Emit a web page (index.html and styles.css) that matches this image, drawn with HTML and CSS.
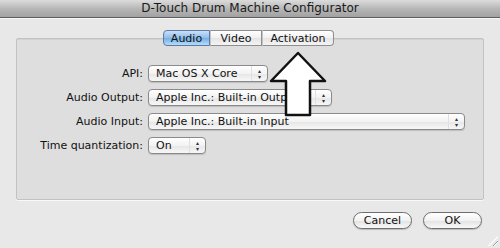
FILE: index.html
```html
<!DOCTYPE html>
<html>
<head>
    <title>D-Touch Drum Machine Configurator</title>
    <link rel="stylesheet" href="styles.css">
</head>
<body>
    <div class="window">
        <div class="titlebar">D-Touch Drum Machine Configurator</div>
        <div class="content">
            <div class="tabs">
                <span class="tab selected">Audio</span>
                <span class="tab">Video</span>
                <span class="tab">Activation</span>
            </div>
            <div class="group">
                <div class="row">
                    <label>API:</label>
                    <div class="popup w-api"><span class="value">Mac OS X Core</span><span class="arrows">&#9652;<br>&#9662;</span></div>
                </div>
                <div class="row">
                    <label>Audio Output:</label>
                    <div class="popup w-out"><span class="value">Apple Inc.: Built-in Output</span><span class="arrows">&#9652;<br>&#9662;</span></div>
                </div>
                <div class="row">
                    <label>Audio Input:</label>
                    <div class="popup w-in"><span class="value">Apple Inc.: Built-in Input</span><span class="arrows">&#9652;<br>&#9662;</span></div>
                </div>
                <div class="row">
                    <label>Time quantization:</label>
                    <div class="popup w-quant"><span class="value">On</span><span class="arrows">&#9652;<br>&#9662;</span></div>
                </div>
            </div>
            <div class="buttons">
                <button>Cancel</button>
                <button>OK</button>
            </div>
        </div>
        <div class="grip"></div>
        <!-- annotation arrow drawn over the dialog -->
        <svg class="pointer" width="60" height="70" viewBox="0 0 60 70">
            <path d="M30 2 L57 30 L42 30 L42 64 L18 64 L18 30 L3 30 Z" fill="#ffffff" stroke="#111" stroke-width="2.5" stroke-linejoin="round"/>
        </svg>
    </div>
</body>
</html>
```

FILE: styles.css
```css
body {
    margin: 0;
    font-family: "DejaVu Sans", sans-serif;
    font-size: 11px;
    color: #111;
    background-color: #e8e8e8;
}
.window {
    position: relative;
    width: 500px;
    height: 248px;
    overflow: hidden;
}
.titlebar {
    height: 17px;
    line-height: 17px;
    text-align: center;
    font-size: 12px;
    color: #1a1a1a;
    background: linear-gradient(#dcdcdc, #b4b4b4 55%, #a2a2a2);
    border-bottom: 1px solid #5e5e5e;
    box-shadow: 0 1px 0 #f6f6f6;
}
.content {
    padding: 12px 16px 0 16px;
}
.tabs {
    display: flex;
    justify-content: center;
    position: relative;
    z-index: 1;
    height: 16px;
    margin: 0 3px -8px 0;
}
.tab {
    display: flex;
    align-items: center;
    justify-content: center;
    box-sizing: border-box;
    height: 16px;
    background: linear-gradient(#ffffff, #f0f0f0 50%, #e4e4e4 51%, #f4f4f4);
    border: 1px solid #8e8e8e;
    border-left: 1px solid #c4c4c4;
}
.tab:first-child {
    border-left: 1px solid #6b7fa6;
    border-radius: 4px 0 0 4px;
    width: 47px;
}
.tab:nth-child(2) {
    width: 52px;
}
.tab:last-child {
    border-radius: 0 4px 4px 0;
    width: 72px;
}
.tab.selected {
    background: linear-gradient(#c9e0f8, #8fbde9 50%, #72aee6 51%, #b7dcf9);
    border-color: #5f78a6;
}
.group {
    height: 134px;
    padding-top: 26px;
    background-color: #dedede;
    border: 1px solid #c2c2c2;
    border-radius: 2px;
    box-shadow: 0 1px 0 #f8f8f8, inset 0 1px 0 #d2d2d2;
}
.row {
    display: flex;
    align-items: center;
    height: 17px;
    margin-bottom: 7px;
}
.row label {
    width: 126px;
    text-align: right;
    margin-right: 5px;
}
.popup {
    display: flex;
    align-items: center;
    height: 15px;
    border: 1px solid #8a8a8a;
    border-radius: 4px;
    background: linear-gradient(#ffffff, #f3f3f3 50%, #e6e6e6 51%, #f7f7f7);
    box-shadow: 0 1px 1px rgba(0, 0, 0, 0.15);
    overflow: hidden;
}
.popup .value {
    flex: 1;
    padding-left: 7px;
    white-space: nowrap;
    overflow: hidden;
}
.popup .arrows {
    width: 16px;
    height: 15px;
    font-size: 6px;
    line-height: 6px;
    text-align: center;
    padding-top: 2px;
    box-sizing: border-box;
    color: #333;
    border-left: 1px solid #e0e0e0;
}
.w-api { width: 118px; }
.w-out { width: 182px; }
.w-in { width: 315px; }
.w-quant { width: 56px; }
.buttons {
    display: flex;
    justify-content: flex-end;
    gap: 11px;
    margin-top: 12px;
    padding-right: 2px;
}
.buttons button {
    width: 59px;
    height: 17px;
    font-family: "DejaVu Sans", sans-serif;
    font-size: 11px;
    color: #111;
    border: 1px solid #6e6e6e;
    border-radius: 9px;
    background: linear-gradient(#ffffff, #f2f2f2 50%, #e2e2e2 51%, #f8f8f8);
    box-shadow: 0 1px 1px rgba(0, 0, 0, 0.2);
    padding: 0;
}
.grip {
    position: absolute;
    right: 2px;
    bottom: 2px;
    width: 10px;
    height: 10px;
    background: repeating-linear-gradient(135deg, transparent 0 2px, #9a9a9a 2px 3px, #fff 3px 4px);
    clip-path: polygon(100% 0, 100% 100%, 0 100%);
}
.pointer {
    position: absolute;
    left: 268px;
    top: 51px;
    z-index: 2;
}
```
